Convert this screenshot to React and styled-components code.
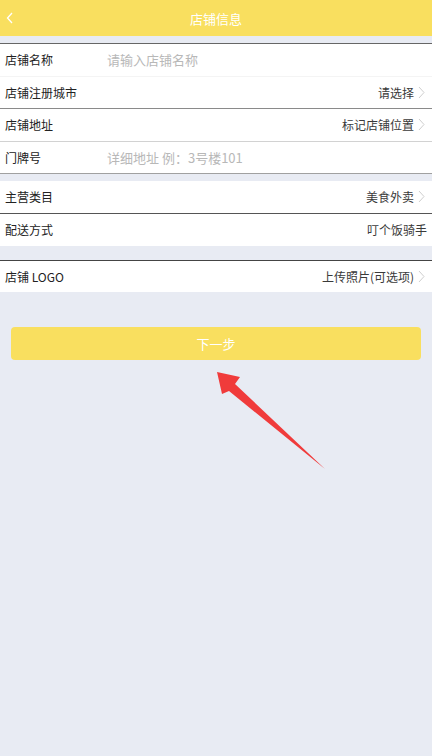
import React from "react";
import styled, { createGlobalStyle } from "styled-components";

const Global = createGlobalStyle`
  html, body { margin: 0; padding: 0; }
  body {
    background: #e8ebf3;
    font-family: "Noto Sans CJK SC", "Noto Sans", sans-serif;
    -webkit-font-smoothing: antialiased;
  }
`;

const Page = styled.div`
  position: relative;
  width: 432px;
  min-height: 756px;
  background: #e8ebf3;
`;

const Header = styled.header`
  position: relative;
  height: 36px;
  background: #f9df5f;
  display: flex;
  align-items: center;
  justify-content: center;
  color: #fff;
  font-size: 13px;
`;

const Back = styled.span`
  position: absolute;
  left: 6px;
  top: 12px;
  display: flex;
`;

const Section = styled.section`
  background: #fff;
  margin-top: ${(p) => p.$gap}px;
  border-top: ${(p) => (p.$top ? `1px solid ${p.$top}` : "none")};
  border-bottom: ${(p) => (p.$bottom ? `1px solid ${p.$bottom}` : "none")};
`;

const Row = styled.div`
  height: ${(p) => p.$h || 31.5}px;
  display: flex;
  align-items: center;
  padding: 0 5px;
  font-size: 12px;
  color: #222;
  border-bottom: ${(p) => (p.$line ? `1px solid ${p.$line}` : "none")};
`;

const Label = styled.span`
  width: 102px;
  flex-shrink: 0;
`;

const Placeholder = styled.span`
  color: #b8b8b8;
  font-size: 13px;
  flex: 1;
`;

const Value = styled.span`
  margin-left: auto;
  color: #3a3a3a;
  display: flex;
  align-items: center;
  gap: 4px;
`;

const ChevronIcon = styled.svg`
  margin-right: 2px;
`;

const ButtonWrap = styled.div`
  padding: 35px 11px 0;
`;

const Button = styled.button`
  width: 100%;
  height: 33px;
  border: none;
  border-radius: 4px;
  background: #f9df5f;
  color: #fff;
  font-family: inherit;
  font-size: 13px;
`;

const Arrow = styled.svg`
  position: absolute;
  left: 0;
  top: 0;
  pointer-events: none;
`;

const Chevron = () => (
  <ChevronIcon width="7" height="13" viewBox="0 0 7 13">
    <path d="M1 1 L6 6.5 L1 12" fill="none" stroke="#cfcfcf" strokeWidth="1" />
  </ChevronIcon>
);

export default function App() {
  return (
    <Page>
      <Global />
      <Header>
        <Back>
          <svg width="8" height="12" viewBox="0 0 8 12">
            <path d="M6 1 L1.5 6 L6 11" fill="none" stroke="#fff" strokeWidth="1.3" />
          </svg>
        </Back>
        店铺信息
      </Header>

      <Section $gap={7} $top="#666" $bottom="#a0a0a0">
        <Row $line="#f4f4f4">
          <Label>店铺名称</Label>
          <Placeholder>请输入店铺名称</Placeholder>
        </Row>
        <Row $line="#8a8a8a">
          <Label>店铺注册城市</Label>
          <Value>
            请选择<Chevron />
          </Value>
        </Row>
        <Row $line="#d2d2d2">
          <Label>店铺地址</Label>
          <Value>
            标记店铺位置<Chevron />
          </Value>
        </Row>
        <Row>
          <Label>门牌号</Label>
          <Placeholder>详细地址 例：3号楼101</Placeholder>
        </Row>
      </Section>

      <Section $gap={7}>
        <Row $line="#555" $h={31.5}>
          <Label>主营类目</Label>
          <Value>
            美食外卖<Chevron />
          </Value>
        </Row>
        <Row $h={32}>
          <Label>配送方式</Label>
          <Value>叮个饭骑手</Value>
        </Row>
      </Section>

      <Section $gap={14} $top="#444">
        <Row $h={31.5}>
          <Label>店铺 LOGO</Label>
          <Value>
            上传照片(可选项)<Chevron />
          </Value>
        </Row>
      </Section>

      <ButtonWrap>
        <Button>下一步</Button>
      </ButtonWrap>

      <Arrow width="432" height="756" viewBox="0 0 432 756">
        <polygon
          points="217,372 240,377 235,384 325,469 229,391 222,394"
          fill="#f03b3b"
        />
      </Arrow>
    </Page>
  );
}
